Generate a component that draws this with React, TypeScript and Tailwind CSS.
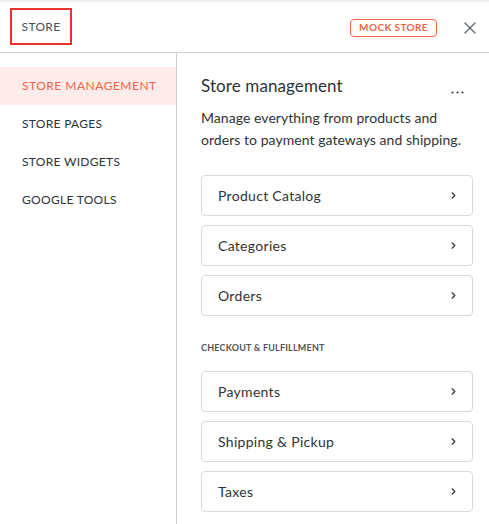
import { X, ChevronRight } from 'lucide-react';

const navItems = ['STORE MANAGEMENT', 'STORE PAGES', 'STORE WIDGETS', 'GOOGLE TOOLS'];
const mainLinks = ['Product Catalog', 'Categories', 'Orders'];
const checkoutLinks = ['Payments', 'Shipping & Pickup', 'Taxes'];

function LinkCard({ label }: { label: string }) {
  return (
    <div className="flex h-[41px] items-center justify-between rounded-[4px] border border-[#d5dadf] pl-4 pr-[13px] text-[14px] tracking-[0.3px] text-[#2e3338]">
      <span>{label}</span>
      <ChevronRight className="h-[11px] w-[11px] text-[#2e3338]" strokeWidth={2.5} />
    </div>
  );
}

export default function App() {
  return (
    <div className="h-[524px] w-[489px] overflow-hidden bg-white font-['Lato',sans-serif] text-[#2e3338]">
      <div className="h-[3px] bg-gradient-to-b from-[#e4e6e8] to-white" />
      <header className="flex h-[50px] items-center justify-between border-b border-[#c9d0d6] pl-[10px] pr-[9px]">
        <div className="flex h-[37px] w-[62px] -translate-y-[1px] items-center justify-center border-2 border-[#e8322b] text-[12px] tracking-[0.3px] text-[#4a5057]">
          STORE
        </div>
        <div className="flex items-center gap-[23px]">
          <span className="flex h-[18px] items-center rounded-[4px] border border-[#f06548] px-[8px] text-[10px] font-bold tracking-[0.4px] text-[#f06548]">
            MOCK STORE
          </span>
          <X className="h-[20px] w-[20px] text-[#5b6670]" strokeWidth={1.5} />
        </div>
      </header>
      <div className="flex h-[471px]">
        <nav className="flex w-[177px] shrink-0 flex-col border-r border-[#c9d0d6] pt-[14px]">
          {navItems.map((item, i) => (
            <div
              key={item}
              className={
                i === 0
                  ? 'flex h-[38px] items-center bg-[#fdecea] pl-[22px] text-[12px] tracking-[0.5px] text-[#f06548]'
                  : 'flex h-[38px] items-center pl-[22px] text-[12px] tracking-[0.3px] text-[#2e3338]'
              }
            >
              {item}
            </div>
          ))}
        </nav>
        <main className="flex-1 pl-6 pr-4 pt-[22px]">
          <div className="flex items-start justify-between">
            <h2 className="text-[17px] leading-[22px] tracking-[0.1px]">Store management</h2>
            <svg className="mr-[9px] mt-[16px]" width="13" height="3" viewBox="0 0 13 3" fill="#3a4046">
              <circle cx="1.5" cy="1.5" r="1.1" />
              <circle cx="6.5" cy="1.5" r="1.1" />
              <circle cx="11.5" cy="1.5" r="1.1" />
            </svg>
          </div>
          <p className="mt-[10px] text-[14px] leading-[22px] tracking-[0.05px] text-[#2e3338]">
            Manage everything from products and orders to payment gateways and shipping.
          </p>
          <div className="mt-[24px] flex flex-col gap-[9px]">
            {mainLinks.map((l) => (
              <LinkCard key={l} label={l} />
            ))}
          </div>
          <div className="mt-[25px] text-[9px] font-bold tracking-[0.2px] text-[#50565c]">CHECKOUT &amp; FULFILLMENT</div>
          <div className="mt-[16px] flex flex-col gap-[9px]">
            {checkoutLinks.map((l) => (
              <LinkCard key={l} label={l} />
            ))}
          </div>
        </main>
      </div>
    </div>
  );
}
